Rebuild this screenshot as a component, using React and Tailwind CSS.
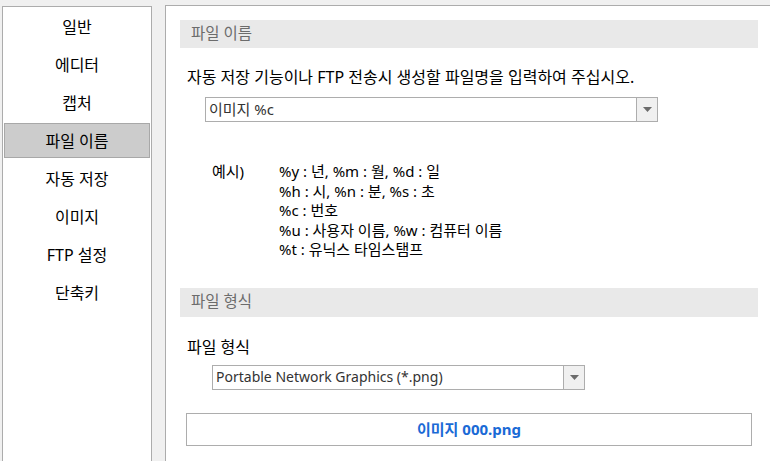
import React from 'react';

const FONT = { fontFamily: '"Noto Sans", "Noto Sans CJK KR", sans-serif' };

const menu = ['일반', '에디터', '캡처', '파일 이름', '자동 저장', '이미지', 'FTP 설정', '단축키'];

const Caret = () => (
    <svg width="9" height="5" viewBox="0 0 9 5"><path d="M0 0h9L4.5 5z" fill="#6b6b6b" /></svg>
);

const Combo = ({ text, width }) => (
    <div className="flex h-[25px] border border-[#adadad] bg-white" style={{ width }}>
        <div className="flex-1 flex items-center pl-[3px] text-[14px] leading-none text-[#333]">{text}</div>
        <div className="w-[21px] flex items-center justify-center bg-[#f0f0f0] border-l border-[#adadad]">
            <Caret />
        </div>
    </div>
);

const SectionHead = ({ children, className = '' }) => (
    <div className={`h-[28px] w-[578px] bg-[#e9e9e9] flex items-center pl-[11px] text-[15.5px] leading-none text-[#6c6c6c] ${className}`}>
        {children}
    </div>
);

export default function App() {
    return (
        <div className="w-[770px] h-[461px] overflow-hidden bg-[#f0f0f0] flex items-start" style={FONT}>
            {/* Left menu */}
            <div className="shrink-0 ml-[2px] mt-[6px] w-[150px] h-[470px] bg-white border border-[#acacac]">
                {menu.map((m) => (
                    <div key={m} className="h-[38px] px-[1px] pt-[2px] pb-[1px]">
                        <div className={`h-full flex items-center justify-center text-[16px] leading-none text-black ${m === '파일 이름' ? 'bg-[#cccccc] border border-[#a8a8a8]' : ''}`}>
                            {m}
                        </div>
                    </div>
                ))}
            </div>

            {/* Main panel */}
            <div className="shrink-0 ml-[13px] mt-[5px] w-[640px] h-[470px] bg-white border-l border-t border-[#acacac] pl-[14px] pt-[14px]">
                <SectionHead>파일 이름</SectionHead>

                <div className="mt-[19px] ml-[7px] text-[16px] leading-[20px] text-black">
                    자동 저장 기능이나 FTP 전송시 생성할 파일명을 입력하여 주십시오.
                </div>

                <div className="mt-[10px] ml-[25px]">
                    <Combo text={<span className="text-[15px]">이미지 %c</span>} width="453px" />
                </div>

                <div className="mt-[40px] ml-[32px] flex text-[15px] leading-[19.5px] text-black">
                    <div className="w-[67px]">예시)</div>
                    <div>
                        <div>%y : 년, %m : 월, %d : 일</div>
                        <div>%h : 시, %n : 분, %s : 초</div>
                        <div>%c : 번호</div>
                        <div>%u : 사용자 이름, %w : 컴퓨터 이름</div>
                        <div>%t : 유닉스 타임스탬프</div>
                    </div>
                </div>

                <SectionHead className="mt-[28px] h-[29px]">파일 형식</SectionHead>

                <div className="mt-[20px] ml-[7px] text-[16px] leading-[20px] text-black">파일 형식</div>

                <div className="mt-[8px] ml-[32px]">
                    <Combo text="Portable Network Graphics (*.png)" width="373px" />
                </div>

                <div className="mt-[23px] ml-[6px] w-[566px] h-[33px] border border-[#adadad] flex items-center justify-center text-[15px] font-bold leading-none text-[#1a6ad6]">
                    이미지 000.png
                </div>
            </div>
        </div>
    );
}
